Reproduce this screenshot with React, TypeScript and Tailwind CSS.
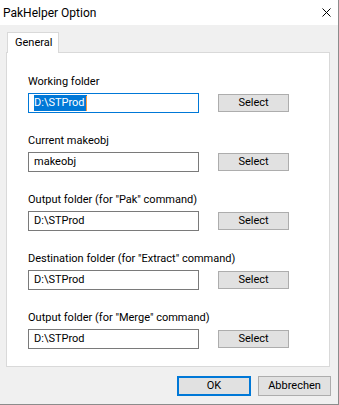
import React from 'react';

type Field = {
  label: string;
  value: string;
  focused?: boolean;
};

const fields: Field[] = [
  { label: 'Working folder', value: 'D:\\STProd', focused: true },
  { label: 'Current makeobj', value: 'makeobj' },
  { label: 'Output folder (for "Pak" command)', value: 'D:\\STProd' },
  { label: 'Destination folder (for "Extract" command)', value: 'D:\\STProd' },
  { label: 'Output folder (for "Merge" command)', value: 'D:\\STProd' },
];

function FolderRow({ label, value, focused }: Field) {
  return (
    <div className="flex flex-col">
      <div className="h-[16px] pt-[1px] leading-[16px]">{label}</div>
      <div className="mt-[4px] flex items-center">
        <div
          className={
            focused
              ? 'flex h-[20px] w-[171px] items-center border border-[#0078d7] bg-white pl-[5px]'
              : 'flex h-[20px] w-[171px] items-center border border-[#7a7a7a] bg-white pl-[5px]'
          }
        >
          {focused ? (
            <span className="flex h-[16px] items-center bg-[#0078d7] leading-[16px] text-white">
              {value}
              <span className="ml-[1px] h-[15px] w-[1px] bg-[#ff9a3c]" />
            </span>
          ) : (
            <span className="leading-[16px]">{value}</span>
          )}
        </div>
        <button className="ml-[19px] flex h-[18px] w-[71px] items-center justify-center border border-[#adadad] bg-[#e1e1e1] leading-[16px]">
          Select
        </button>
      </div>
    </div>
  );
}

export default function App() {
  return (
    <div
      className="flex h-[405px] w-[339px] flex-col border-r border-b border-[#8c8c8c] bg-[#f0f0f0] text-[11px] text-black"
      style={{ fontFamily: 'Roboto, "Noto Sans", sans-serif' }}
    >
      <div className="flex h-[25px] shrink-0 items-center justify-between bg-white pl-[3px] pr-[7px] text-[12px]">
        <span className="leading-[16px]">PakHelper Option</span>
        <svg width="9" height="9" viewBox="0 0 9 9">
          <path d="M0.5 0.5 L8.5 8.5 M8.5 0.5 L0.5 8.5" stroke="#000" strokeWidth="1" />
        </svg>
      </div>

      <div className="flex flex-col px-[6px] pt-[7px]">
        <div className="flex">
          <div className="relative z-10 ml-[1px] -mb-[1px] flex h-[21px] w-[52px] items-center border-x border-t border-[#d9d9d9] bg-white pl-[7px]">
            General
          </div>
        </div>
        <div className="flex h-[315px] w-[324px] flex-col gap-[19px] border border-[#d9d9d9] bg-white pl-[21px] pt-[20px]">
          {fields.map((f) => (
            <FolderRow key={f.label} {...f} />
          ))}
        </div>
      </div>

      <div className="mt-[9px] flex justify-end gap-[7px] pr-[7px]">
        <button className="flex h-[20px] w-[74px] items-center justify-center border-2 border-[#0078d7] bg-[#e1e1e1]">
          OK
        </button>
        <button className="flex h-[20px] w-[73px] items-center justify-center border border-[#adadad] bg-[#e1e1e1]">
          Abbrechen
        </button>
      </div>
    </div>
  );
}
